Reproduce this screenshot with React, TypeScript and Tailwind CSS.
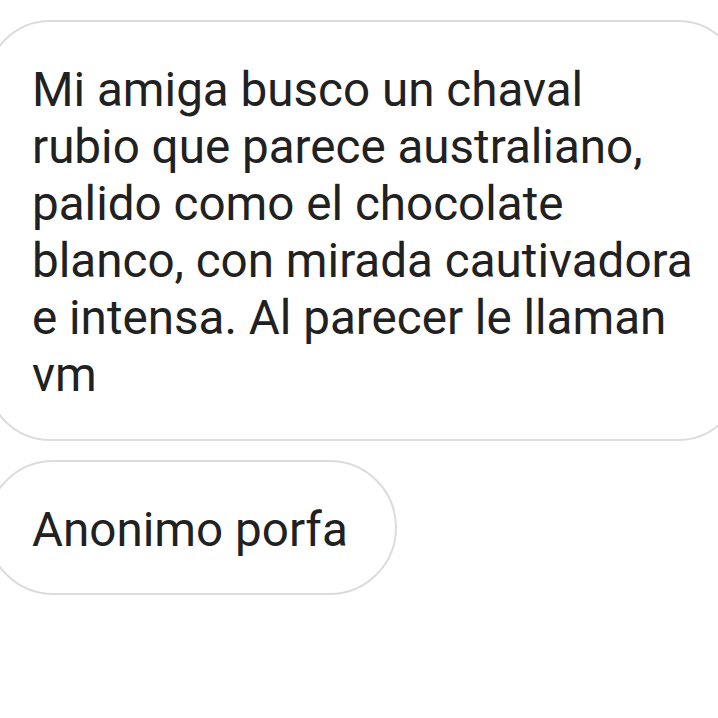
const lines = [
  'Mi amiga busco un chaval',
  'rubio que parece australiano,',
  'palido como el chocolate',
  'blanco, con mirada cautivadora',
  'e intensa. Al parecer le llaman',
  'vm',
];

export default function App() {
  return (
    <div
      className="w-[718px] h-[718px] overflow-hidden bg-white pt-[20px] text-[#212121]"
      style={{ fontFamily: 'Roboto, "Noto Sans", sans-serif' }}
    >
      <div className="-ml-[14px] w-[756px] rounded-[64px] border-2 border-[#dcdcdc] pl-[44px] pt-[40px] pb-[35px] text-[47.6px] leading-[57px]">
        {lines.map((line) => (
          <div key={line} className="whitespace-nowrap">
            {line}
          </div>
        ))}
      </div>
      <div className="mt-[19px] -ml-[14px] inline-block rounded-full border-2 border-[#dcdcdc] pl-[44px] pr-[47px] pt-[40px] pb-[34px] text-[47.6px] leading-[57px] whitespace-nowrap">
        Anonimo porfa
      </div>
    </div>
  );
}
